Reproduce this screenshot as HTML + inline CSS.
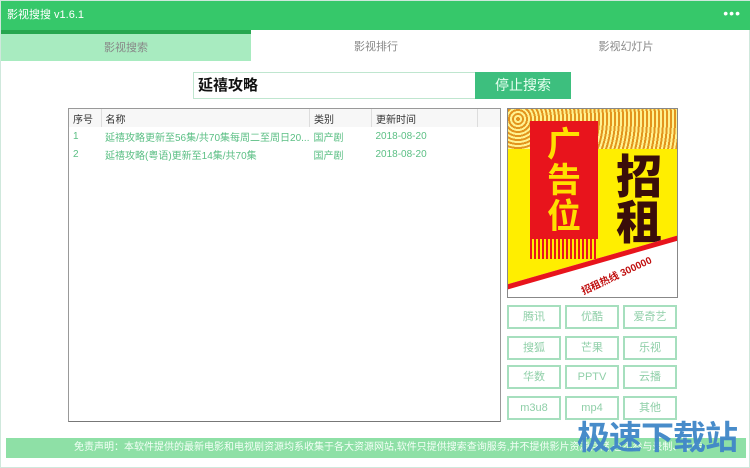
<!DOCTYPE html>
<html><head><meta charset="utf-8"><style>
*{margin:0;padding:0;box-sizing:border-box}
body{width:750px;height:468px;background:#fff;position:relative;overflow:hidden;font-family:"Liberation Sans","Noto Sans CJK SC",sans-serif;border:1px solid #cfe8dc}
.a{position:absolute}
.title{left:0;top:0;width:750px;height:29px;background:#36c86a;color:#fff;font-size:11px;line-height:29px;padding-left:6px}
.tab{top:29px;height:31px;font-size:11px;color:#888;text-align:center;line-height:34px}
.btn{width:54px;height:24px;border:2px solid #a6dfbe;color:#8fcfa8;font-size:11px;text-align:center;line-height:20px}
td{font-size:10px;height:18px;white-space:nowrap;padding-left:4px}
</style></head><body>
<div class="a title">影视搜搜 v1.6.1</div>
<div class="a" style="right:8px;top:4px;color:#fff;font-size:14px;letter-spacing:1px">•••</div>
<div class="a tab" style="left:0;width:250px;background:#a8ebc0;border-top:4px solid #27a64f;line-height:28px">影视搜索</div>
<div class="a tab" style="left:250px;width:250px">影视排行</div>
<div class="a tab" style="left:500px;width:250px">影视幻灯片</div>
<div class="a" style="left:192px;top:71px;width:283px;height:27px;border:1px solid #bfe6cf;font-size:15px;font-weight:bold;line-height:25px;padding-left:4px;color:#111">延禧攻略</div>
<div class="a" style="left:474px;top:71px;width:96px;height:27px;background:#3dbf7e;color:#e8fff0;font-size:14px;text-align:center;line-height:27px">停止搜索</div>
<div class="a" style="left:67px;top:107px;width:433px;height:314px;border:1px solid #999;border-bottom-color:#777">
<table style="border-collapse:collapse;width:100%">
<tr style="background:#f7f7f7;color:#333"><td style="width:32px;border-right:1px solid #ddd;height:17px">序号</td><td style="width:206px;border-right:1px solid #ddd">名称</td><td style="width:62px;border-right:1px solid #ddd">类别</td><td style="width:106px;border-right:1px solid #ddd">更新时间</td><td></td></tr>
<tr style="color:#5bbf84"><td>1</td><td>延禧攻略更新至56集/共70集每周二至周日20...</td><td>国产剧</td><td>2018-08-20</td><td></td></tr>
<tr style="color:#5bbf84"><td>2</td><td>延禧攻略(粤语)更新至14集/共70集</td><td>国产剧</td><td>2018-08-20</td><td></td></tr>
</table></div>
<div class="a" style="left:506px;top:107px;width:171px;height:190px;background:#ffee00;border:1px solid #888;overflow:hidden">
<div class="a" style="left:0;top:0;width:171px;height:40px;background:repeating-radial-gradient(circle at 10px 10px,#e08a20 0 2px,#fff3a0 2px 4px);opacity:.9"></div>
<div class="a" style="left:22px;top:12px;width:68px;height:118px;background:#e8141c;color:#ffe000;font-weight:bold;font-size:34px;line-height:36px;text-align:center;padding-top:6px">广<br>告<br>位</div>
<div class="a" style="left:22px;top:130px;width:68px;height:20px;background:repeating-linear-gradient(90deg,#e8141c 0 2px,#ffee00 2px 4px)"></div>
<div class="a" style="left:108px;top:45px;color:#3a0e0a;font-weight:900;font-size:46px;line-height:46px">招<br>租</div>
<div class="a" style="left:-10px;top:178px;width:210px;height:70px;background:#fff;border-top:5px solid #e8141c;transform:rotate(-16deg);transform-origin:0 0"></div>
<div class="a" style="left:70px;top:158px;color:#c01010;font-size:10px;font-weight:bold;transform:rotate(-25deg)">招租热线 300000</div>
</div>
<div class="a btn" style="left:506px;top:304px">腾讯</div>
<div class="a btn" style="left:564px;top:304px">优酷</div>
<div class="a btn" style="left:622px;top:304px">爱奇艺</div>
<div class="a btn" style="left:506px;top:335px">搜狐</div>
<div class="a btn" style="left:564px;top:335px">芒果</div>
<div class="a btn" style="left:622px;top:335px">乐视</div>
<div class="a btn" style="left:506px;top:364px">华数</div>
<div class="a btn" style="left:564px;top:364px">PPTV</div>
<div class="a btn" style="left:622px;top:364px">云播</div>
<div class="a btn" style="left:506px;top:395px">m3u8</div>
<div class="a btn" style="left:564px;top:395px">mp4</div>
<div class="a btn" style="left:622px;top:395px">其他</div>
<div class="a" style="left:5px;top:437px;width:740px;height:20px;background:#8ee0a6;color:#f4fff7;font-size:10px;line-height:20px;padding-left:68px;white-space:nowrap;overflow:hidden">免责声明：本软件提供的最新电影和电视剧资源均系收集于各大资源网站,软件只提供搜索查询服务,并不提供影片资源存储,也不参与录制、上传</div>
<div class="a" style="left:576px;top:417px;color:#3f86c8;font-size:33px;font-weight:bold;letter-spacing:-1px;line-height:40px;opacity:.95">极速下载站</div>
</body></html>
